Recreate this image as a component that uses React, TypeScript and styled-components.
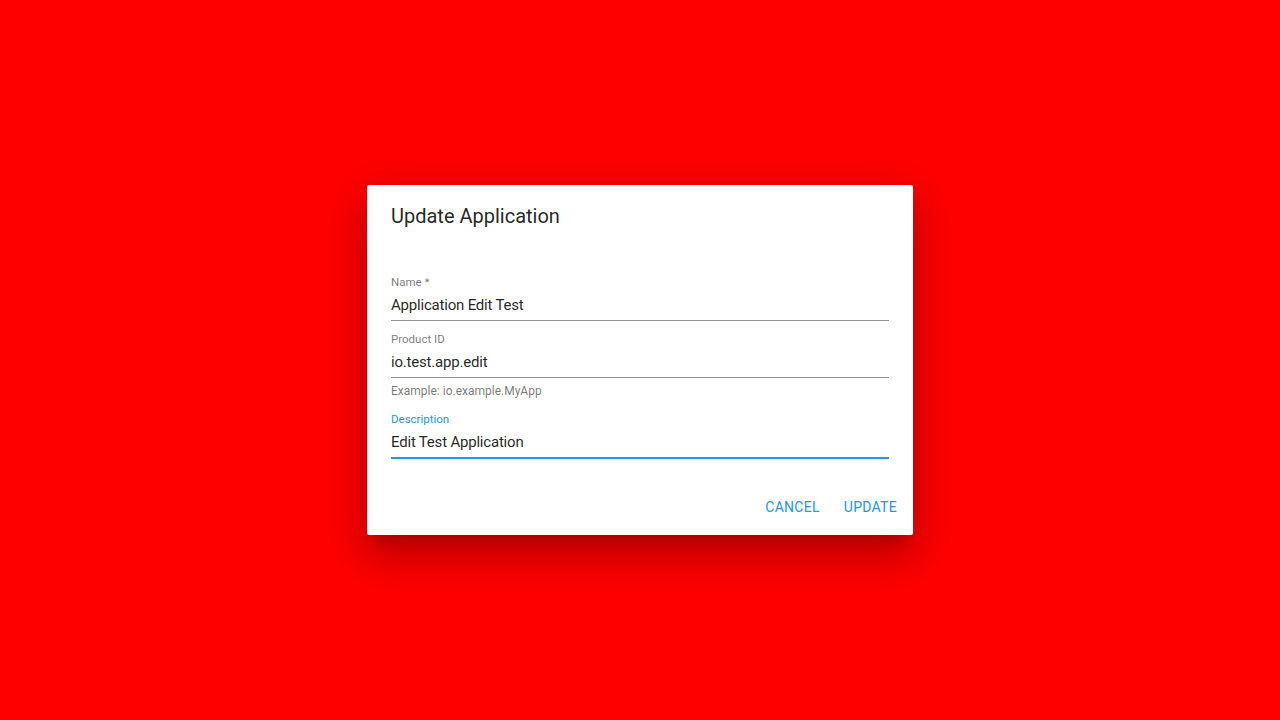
import React from 'react';
import styled, { createGlobalStyle } from 'styled-components';

const GlobalStyle = createGlobalStyle`
  html, body {
    margin: 0;
    height: 100%;
  }
  body {
    background: #ff0000;
    font-family: Roboto, "Liberation Sans", sans-serif;
  }
  #root {
    height: 100%;
  }
`;

const Page = styled.div`
  height: 720px;
  display: flex;
  align-items: center;
  justify-content: center;
`;

const Dialog = styled.div`
  width: 546px;
  background: #fff;
  border-radius: 2px;
  box-shadow: 0px 11px 15px -7px rgba(0, 0, 0, 0.2),
    0px 24px 38px 3px rgba(0, 0, 0, 0.14), 0px 9px 46px 8px rgba(0, 0, 0, 0.12);
  display: flex;
  flex-direction: column;
`;

const Title = styled.h2`
  margin: 0;
  padding: 15px 24px 17px;
  font-size: 20px;
  line-height: 32px;
  font-weight: 400;
  color: rgba(0, 0, 0, 0.87);
`;

const Content = styled.div`
  padding: 19px 24px 21px;
  display: flex;
  flex-direction: column;
`;

const Field = styled.div`
  display: flex;
  flex-direction: column;
  margin: 8px 0 4px;
`;

const Label = styled.label<{ $focused?: boolean }>`
  font-size: 11.5px;
  line-height: 12px;
  color: ${(p) => (p.$focused ? '#2196f3' : 'rgba(0, 0, 0, 0.54)')};
`;

const Input = styled.div<{ $focused?: boolean }>`
  padding: 8px 0 5px;
  font-size: 15px;
  letter-spacing: -0.2px;
  line-height: 19px;
  color: rgba(0, 0, 0, 0.87);
  border-bottom: ${(p) =>
    p.$focused ? '2px solid #2196f3' : '1px solid rgba(0, 0, 0, 0.42)'};
  margin-bottom: ${(p) => (p.$focused ? '-1px' : '0')};
`;

const Helper = styled.p`
  margin: 3px 0 0;
  font-size: 12px;
  line-height: 20px;
  color: rgba(0, 0, 0, 0.54);
`;

const Actions = styled.div`
  display: flex;
  justify-content: flex-end;
  padding: 8px;
  gap: 8px;
`;

const Button = styled.button`
  font-family: inherit;
  font-size: 14px;
  font-weight: 400;
  letter-spacing: 0.02em;
  text-transform: uppercase;
  color: #2196f3;
  background: none;
  border: none;
  padding: 2px 8px 6px;
  min-width: 64px;
  height: 36px;
  cursor: pointer;
`;

export default function App() {
  return (
    <>
      <GlobalStyle />
      <Page>
        <Dialog>
          <Title>Update Application</Title>
          <Content>
            <Field>
              <Label>Name *</Label>
              <Input>Application Edit Test</Input>
            </Field>
            <Field>
              <Label>Product ID</Label>
              <Input>io.test.app.edit</Input>
              <Helper>Example: io.example.MyApp</Helper>
            </Field>
            <Field>
              <Label $focused>Description</Label>
              <Input $focused>Edit Test Application</Input>
            </Field>
          </Content>
          <Actions>
            <Button>Cancel</Button>
            <Button>Update</Button>
          </Actions>
        </Dialog>
      </Page>
    </>
  );
}
